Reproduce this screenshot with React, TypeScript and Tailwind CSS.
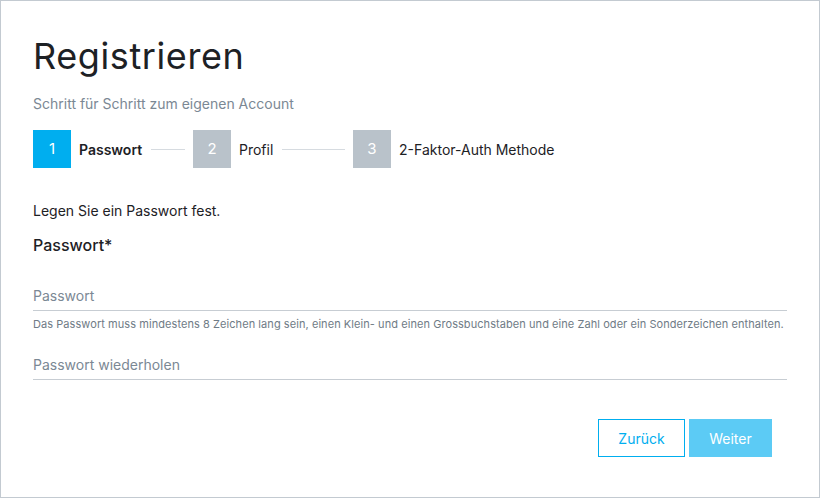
import { useState } from "react"

const steps = [
  { n: 1, label: "Passwort" },
  { n: 2, label: "Profil" },
  { n: 3, label: "2-Faktor-Auth Methode" },
]

export default function App() {
  const [current] = useState(1)
  const [pw, setPw] = useState("")
  const [pw2, setPw2] = useState("")

  return (
    <div
      className="h-[498px] w-[820px] border border-[#c3cad1] bg-white text-[#1d2125]"
      style={{ fontFamily: "Inter, 'Noto Sans', sans-serif" }}
    >
      <div className="px-[32px] pt-[31px]">
        {/* Titel */}
        <h1 className="text-[36px] leading-[48px] tracking-[0.6px]">Registrieren</h1>
        <p className="mt-[14px] text-[14px] leading-[20px] text-[#7b8894]">
          Schritt für Schritt zum eigenen Account
        </p>

        {/* Schritte */}
        <div className="mt-[16px] flex items-center">
          {steps.map((s, i) => {
            const active = s.n === current
            const last = i === steps.length - 1
            return (
              <div key={s.n} className={`flex items-center ${last ? "" : "w-[160px] pr-[8px]"}`}>
                <div
                  className={`flex h-[38px] w-[38px] shrink-0 items-center justify-center text-[15px] text-white ${
                    active ? "bg-[#00aeef]" : "bg-[#b9c2ca]"
                  }`}
                >
                  {s.n}
                </div>
                <span className={`ml-[8px] text-[14px] whitespace-nowrap ${active ? "font-semibold" : ""}`}>
                  {s.label}
                </span>
                {!last && <div className="ml-[9px] h-px flex-1 bg-[#d6dbe0]" />}
              </div>
            )
          })}
        </div>

        <p className="mt-[33px] text-[14px] leading-[20px]">Legen Sie ein Passwort fest.</p>
        <h2 className="mt-[12px] text-[16px] font-medium leading-[24px]">Passwort*</h2>

        {/* Felder */}
        <div className="mt-[24px] w-[754px]">
          <input
            type="password"
            value={pw}
            onChange={(e) => setPw(e.target.value)}
            placeholder="Passwort"
            className="h-[30px] w-full border-b border-[#c7cdd3] bg-transparent text-[14px] outline-none placeholder:text-[#7b8894]"
          />
          <p className="mt-[6px] whitespace-nowrap text-[11px] leading-[14px] tracking-[0.065px] text-[#6f7b86]">
            Das Passwort muss mindestens 8 Zeichen lang sein, einen Klein- und einen Grossbuchstaben und eine Zahl oder ein Sonderzeichen enthalten.
          </p>
          <input
            type="password"
            value={pw2}
            onChange={(e) => setPw2(e.target.value)}
            placeholder="Passwort wiederholen"
            className="mt-[19px] h-[30px] w-full border-b border-[#c7cdd3] bg-transparent text-[14px] outline-none placeholder:text-[#7b8894]"
          />
        </div>

        {/* Aktionen */}
        <div className="mt-[39px] flex w-[739px] justify-end gap-[4px]">
          <button className="h-[38px] w-[87px] border border-[#00aeef] text-[14px] text-[#00aeef]">
            Zurück
          </button>
          <button className="h-[38px] w-[83px] bg-[#5ccbf5] text-[14px] text-white">Weiter</button>
        </div>
      </div>
    </div>
  )
}
